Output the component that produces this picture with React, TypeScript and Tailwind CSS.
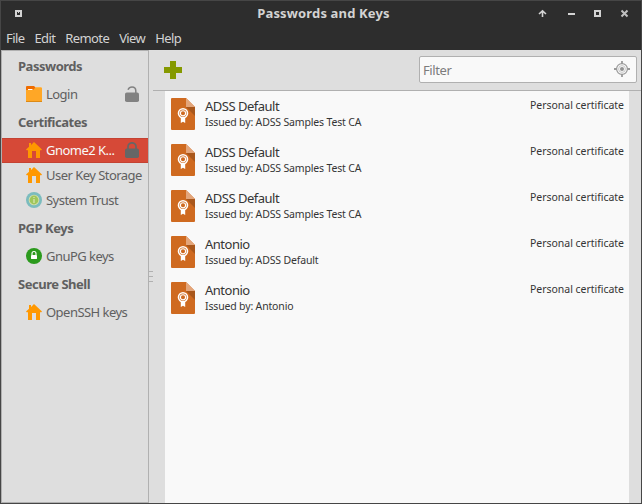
import type { ReactNode } from 'react';

const House = () => (
  <svg width="16" height="16" viewBox="0 0 16 16" fill="#ff9800">
    <path d="M8 0 16 7.6 15 8.6 14 8V16H10V9H6V16H2V8L1 8.6 0 7.6 3 4.8V1H5V2.9Z" />
  </svg>
);

const Folder = () => (
  <svg width="16" height="16" viewBox="0 0 16 16">
    <path d="M0 1Q0 0 1 0H8L10 2V5H0Z" fill="#ef6c00" />
    <path d="M10 1H15Q16 1 16 3H9Z" fill="#ffb74d" />
    <path d="M2 3H7L6 4H2Z" fill="#fff" />
    <path d="M0 4H7L9 2H16V16H0Z" fill="#ffa726" />
    <path d="M0 15H16V16H0Z" fill="#dc8a16" />
  </svg>
);

const Trust = () => (
  <svg width="16" height="16" viewBox="0 0 16 16">
    <circle cx="8" cy="8" r="8" fill="#7bbcbe" />
    <circle cx="8" cy="8" r="5.3" fill="#d6dfac" />
    <circle cx="8" cy="8" r="4.4" fill="#9fc65b" />
    <path d="M8 5V6M8 7V11" stroke="#dce8b8" strokeWidth="1.2" />
  </svg>
);

const Gpg = () => (
  <svg width="16" height="16" viewBox="0 0 16 16">
    <circle cx="8" cy="8" r="8" fill="#2b9a1d" />
    <rect x="5" y="7" width="6" height="4" rx=".4" fill="#fff" />
    <path d="M6 7V5.5a2 2 0 0 1 4 0V7" fill="none" stroke="#fff" strokeWidth="1.1" />
  </svg>
);

const Lock = ({ open = false }: { open?: boolean }) => (
  <svg width="14" height="16" viewBox="0 0 14 16" fill={open ? '#828282' : '#666'}>
    <rect y="6.5" width="14" height="9.5" rx="1.8" />
    {open ? (
      <path d="M3 3.7C4 1.4 5.4.9 7 .9c2.4 0 3.8 1.7 3.8 3.8V7" fill="none" stroke="#828282" strokeWidth="1.5" />
    ) : (
      <path d="M3 7V4.8a4 4 0 0 1 8 0V7" fill="none" stroke="#666" strokeWidth="1.7" />
    )}
  </svg>
);

const Certificate = () => (
  <svg width="24" height="32" viewBox="0 0 24 32" className="shrink-0">
    <path d="M1 0H15L24 9V31Q24 32 23 32H1Q0 32 0 31V1Q0 0 1 0Z" fill="#cf6a20" />
    <path d="M15 9H24V18Z" fill="#a9571b" />
    <path d="M15 0 24 9H15Z" fill="#e3a57a" />
    <path d="M9.8 19H14.2V25L12 23.8 9.8 25Z" fill="#fff" />
    <circle cx="12" cy="15.3" r="4.5" fill="#cf6a20" stroke="#fff" strokeWidth="1.6" />
    <circle cx="12" cy="15.3" r="2.6" fill="none" stroke="#fff" strokeWidth="1.1" />
  </svg>
);

const Target = () => (
  <svg width="16" height="16" viewBox="0 0 16 16" fill="none" stroke="#999" className="mb-px">
    <circle cx="8" cy="8" r="5.4" strokeWidth="1.2" />
    <circle cx="8" cy="8" r="3.4" strokeWidth=".7" stroke="#b5b5b5" />
    <circle cx="8" cy="8" r="2" fill="#929292" stroke="none" />
    <path d="M8 0V3M8 13V16M0 8H3M13 8H16" strokeWidth="1.8" />
  </svg>
);

const Heading = ({ children }: { children: string }) => (
  <div className="flex h-[31px] items-center pl-4 text-[13px] font-bold leading-none tracking-[-0.48px] text-[#606060]">{children}</div>
);

type ItemProps = { icon: ReactNode; label: string; lock?: ReactNode; selected?: boolean };
const Item = ({ icon, label, lock, selected }: ItemProps) => (
  <div
    className={
      'flex h-[25px] items-center pl-6 text-[13px] leading-none tracking-[-0.53px] [&_svg]:mb-px [&_svg]:shrink-0 ' +
      (selected ? 'border-y border-[#c44232] bg-[#d64937] text-[#f9f9f9]' : 'text-[#606060]')
    }
  >
    {icon}
    <span className="ml-1 whitespace-nowrap">{label}</span>
    {lock && <span className="ml-auto mr-[9px]">{lock}</span>}
  </div>
);

const menus = ['File', 'Edit', 'Remote', 'View', 'Help'];

const certificates = [
  ['ADSS Default', 'ADSS Samples Test CA'],
  ['ADSS Default', 'ADSS Samples Test CA'],
  ['ADSS Default', 'ADSS Samples Test CA'],
  ['Antonio', 'ADSS Default'],
  ['Antonio', 'Antonio'],
];

export default function App() {
  return (
    <div className="flex h-[504px] w-[642px] flex-col overflow-hidden border border-[#464646] bg-[#dedede] font-['Noto_Sans',sans-serif]">
      <header className="h-[49px] shrink-0 bg-[#2d2d2d] text-[#d3d3d3]">
        <div className="flex h-[25px] items-center">
          <svg width="50" height="25" viewBox="1 1 50 25">
            <path d="M15 10H22V17H15ZM17 12V15H20V12H19V13H18V12Z" fill="#d3d3d3" fillRule="evenodd" />
          </svg>
          <h1 className="ml-[65px] flex-1 text-center text-[13px] font-bold leading-none tracking-[0.15px]">Passwords and Keys</h1>
          <svg width="110" height="25" viewBox="531 1 110 25">
            <path d="M542.5 17V11M539 14 542.5 10.8 546 14" fill="none" stroke="#d3d3d3" strokeWidth="1.6" />
            <path d="M568 13H575V15H568Z" fill="#d3d3d3" />
            <path d="M594 10H601V17H594ZM596 12V15H599V12Z" fill="#d3d3d3" fillRule="evenodd" />
            <path d="M621.5 10.5 627.5 16.5M627.5 10.5 621.5 16.5" stroke="#c0c0c0" strokeWidth="2" />
          </svg>
        </div>
        <nav className="flex h-6 items-center gap-[10px] pl-[5px] text-[13px] leading-none tracking-[-0.6px]">
          {menus.map((m) => <span key={m}>{m}</span>)}
        </nav>
      </header>
      <div className="flex min-h-0 flex-1">
        <aside className="w-[148px] shrink-0 border border-[#b0b0b0]">
          <Heading>Passwords</Heading>
          <Item icon={<Folder />} label="Login" lock={<Lock open />} />
          <Heading>Certificates</Heading>
          <Item icon={<House />} label="Gnome2 K..." lock={<Lock />} selected />
          <Item icon={<House />} label="User Key Storage" />
          <Item icon={<Trust />} label="System Trust" />
          <Heading>PGP Keys</Heading>
          <Item icon={<Gpg />} label="GnuPG keys" />
          <Heading>Secure Shell</Heading>
          <Item icon={<House />} label="OpenSSH keys" />
        </aside>
        <div className="flex w-1 shrink-0 flex-col gap-1 pt-[221px]">
          <div className="h-px bg-[#b0b0b0]" />
          <div className="h-px bg-[#b0b0b0]" />
          <div className="h-px bg-[#b0b0b0]" />
        </div>
        <main className="flex min-w-0 flex-1 flex-col">
          <div className="flex h-[41px] shrink-0 items-center border-b border-[#b0b0b0] pl-[11px] pr-1">
            <svg width="18" height="18" viewBox="0 0 18 18">
              <path d="M6 0H12V6H18V12H12V18H6V12H0V6H6Z" fill="#859900" />
            </svg>
            <div className="mb-px ml-auto flex h-[27px] w-[218px] items-center rounded-[2px] border border-[#b0b0b0] bg-[#f9f9f9] pl-[3px] pr-[6px] text-[13px] leading-none tracking-[-0.4px] text-[#7c7c7c]">
              <span className="flex-1 pt-px">Filter</span>
              <Target />
            </div>
          </div>
          <div className="ml-3 mr-3 flex-1 bg-[#f9f9f9] text-[#353535]">
            {certificates.map(([name, issuer], i) => (
              <div key={i} className="flex h-[46px] pl-[6px] pr-[5px] pt-[7px]">
                <Certificate />
                <div className="ml-[10px] flex-1">
                  <div className="text-[13px] leading-4 tracking-[-0.5px]">{name}</div>
                  <div className="text-[10.5px] leading-4 tracking-[-0.16px]">Issued by: {issuer}</div>
                </div>
                <div className="text-[10.5px] leading-[14px] tracking-[-0.03px]">Personal certificate</div>
              </div>
            ))}
          </div>
        </main>
      </div>
    </div>
  );
}
